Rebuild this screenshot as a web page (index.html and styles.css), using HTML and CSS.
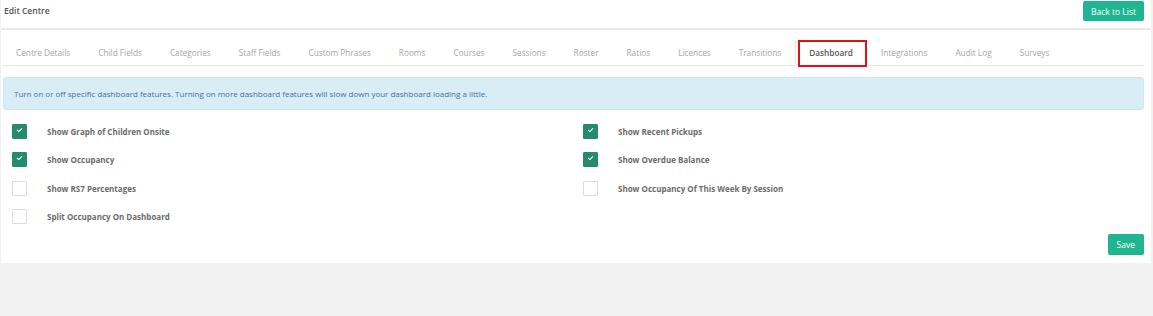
FILE: index.html
```html
<!DOCTYPE html>
<html lang="en">
<head>
    <meta charset="UTF-8">
    <title>Edit Centre</title>
    <link rel="stylesheet" href="styles.css">
</head>
<body>
    <div class="panel">
        <header class="panel-head">
            <h1>Edit Centre</h1>
            <button class="btn">Back to List</button>
        </header>

        <ul class="tabs">
            <li><a href="#">Centre Details</a></li>
            <li><a href="#">Child Fields</a></li>
            <li><a href="#">Categories</a></li>
            <li><a href="#">Staff Fields</a></li>
            <li><a href="#">Custom Phrases</a></li>
            <li><a href="#">Rooms</a></li>
            <li><a href="#">Courses</a></li>
            <li><a href="#">Sessions</a></li>
            <li><a href="#">Roster</a></li>
            <li><a href="#">Ratios</a></li>
            <li><a href="#">Licences</a></li>
            <li><a href="#">Transitions</a></li>
            <li class="active"><a href="#">Dashboard</a></li>
            <li><a href="#">Integrations</a></li>
            <li><a href="#">Audit Log</a></li>
            <li><a href="#">Surveys</a></li>
        </ul>

        <div class="alert">Turn on or off specific dashboard features. Turning on more dashboard features will slow down your dashboard loading a little.</div>

        <div class="options">
            <div class="col">
                <label class="opt"><span class="box checked"></span>Show Graph of Children Onsite</label>
                <label class="opt"><span class="box checked"></span>Show Occupancy</label>
                <label class="opt"><span class="box"></span>Show RS7 Percentages</label>
                <label class="opt"><span class="box"></span>Split Occupancy On Dashboard</label>
            </div>
            <div class="col">
                <label class="opt"><span class="box checked"></span>Show Recent Pickups</label>
                <label class="opt"><span class="box checked"></span>Show Overdue Balance</label>
                <label class="opt"><span class="box"></span>Show Occupancy Of This Week By Session</label>
            </div>
        </div>

        <div class="actions">
            <button class="btn">Save</button>
        </div>
    </div>
</body>
</html>
```

FILE: styles.css
```css
body {
    margin: 0;
    background: #f2f2f2;
    font-family: "Open Sans", Arial, sans-serif;
    color: #555;
}
.panel {
    background: #fff;
    width: 1150px;
    margin-left: 1px;
    padding-bottom: 8px;
}
.panel-head {
    display: flex;
    justify-content: space-between;
    align-items: flex-start;
    height: 27px;
    border-bottom: 2px solid #e6e9ed;
    padding: 1px 7px 0 3px;
}
.panel-head h1 {
    margin: 4px 0 0;
    font-size: 8.5px;
    font-weight: 600;
    color: #555;
}
.btn {
    background: #1fb590;
    color: #fff;
    border: none;
    border-radius: 2px;
    font-family: inherit;
    font-size: 8.5px;
    padding: 0 8px;
    height: 20px;
}
.tabs {
    list-style: none;
    display: flex;
    margin: 11px 7px 0 1px;
    padding: 0;
    border-bottom: 1px solid #e6e6e6;
}
.tabs li {
    margin-bottom: -1px;
}
.tabs a {
    display: block;
    padding: 5px 13px 7px;
    font-size: 8.25px;
    color: #a5a5a5;
    text-decoration: none;
    border: 1px solid transparent;
}
.tabs .active {
    position: relative;
}
.tabs .active a {
    color: #555;
    font-weight: 600;
    background: #fff;
    border-color: #e2e2e2 #e2e2e2 #fff;
}
/* red highlight drawn over the active tab */
.tabs .active::after {
    content: "";
    position: absolute;
    top: -1px;
    bottom: -1px;
    left: 3px;
    right: 0;
    border: 2px solid #e3101c;
}
.alert {
    margin: 11px 7px 0 2px;
    padding: 10px 10px 10px;
    background: #d9edf7;
    border: 1px solid #cce8f4;
    border-radius: 3px;
    color: #41738f;
    font-size: 8px;
}
.options {
    display: grid;
    grid-template-columns: 571px 1fr;
    padding: 7px 0 0 11px;
}
.col {
    display: flex;
    flex-direction: column;
}
.opt {
    display: flex;
    align-items: center;
    height: 28.5px;
    font-size: 8px;
    font-weight: 700;
    color: #6b6b6b;
}
.box {
    width: 13px;
    height: 13px;
    border: 1px solid #dcdcdc;
    border-radius: 1px;
    margin-right: 20px;
    flex-shrink: 0;
}
.box.checked {
    background: #268b6d;
    border-color: #268b6d;
    position: relative;
}
.box.checked::after {
    content: "";
    position: absolute;
    left: 4px;
    top: 3px;
    width: 4px;
    height: 2px;
    border-left: 1.5px solid #fff;
    border-bottom: 1.5px solid #fff;
    transform: rotate(-45deg);
}
.actions {
    display: flex;
    justify-content: flex-end;
    padding: 3px 7px 0 0;
}
.actions .btn {
    height: 21px;
    padding: 0 9px;
}
```
